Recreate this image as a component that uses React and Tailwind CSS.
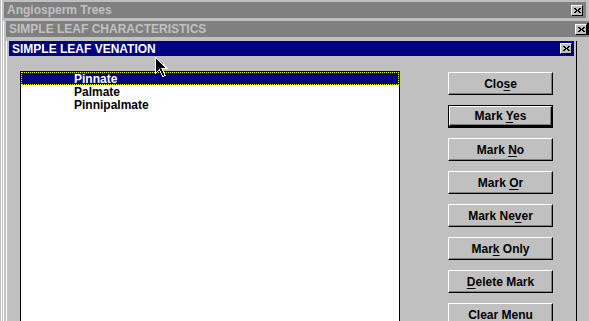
import React from 'react'

const font = "font-['Liberation_Sans',Arial,sans-serif]"

function CloseBox({ className = '' }) {
  return (
    <div className={`shrink-0 w-[12px] h-[11px] bg-[#c0c0c0] border-t border-l border-white border-r border-b border-r-black border-b-black flex items-center justify-center ${className}`}>
      <svg width="7" height="5" viewBox="0 0 7 5" shapeRendering="crispEdges">
        <path d="M0 0h2v1h-2zM5 0h2v1h-2zM1 1h2v1h-2zM4 1h2v1h-2zM2 2h3v1h-3zM1 3h2v1h-2zM4 3h2v1h-2zM0 4h2v1h-2zM5 4h2v1h-2z" fill="#000" />
      </svg>
    </div>
  )
}

function Btn({ label, u, isDefault }) {
  // label split around the underlined letter
  const i = u == null ? -1 : label.indexOf(u)
  const text =
    i < 0 ? label : (
      <>
        {label.slice(0, i)}
        <span className="underline underline-offset-[2px]">{label[i]}</span>
        {label.slice(i + 1)}
      </>
    )
  return (
    <div className={`shrink-0 w-[105px] h-[23px] ${isDefault ? 'border border-black border-b-2' : ''}`}>
      <div className="h-full border border-t-white border-l-white border-r-black border-b-black shadow-[inset_-1px_-1px_0_#808080] flex items-center justify-center text-[12px] font-bold text-black">
        <span className="whitespace-pre">{text}</span>
      </div>
    </div>
  )
}

const buttons = [
  { label: 'Close', u: 's' },
  { label: 'Mark Yes', u: 'Y', isDefault: true },
  { label: 'Mark No', u: 'N' },
  { label: 'Mark Or', u: 'O' },
  { label: 'Mark Never', u: 'v' },
  { label: 'Mark Only', u: 'k' },
  { label: 'Delete Mark', u: 'D' },
  { label: 'Clear Menu' },
]

const items = ['Pinnate', 'Palmate', 'Pinnipalmate']

export default function App() {
  return (
    <div className={`relative w-[589px] h-[321px] overflow-hidden bg-[#c0c0c0] pl-[1px] ${font}`}>
      <div className="h-full flex flex-col border-l border-white pl-[1px] pt-[2px]">
        {/* Angiosperm Trees */}
        <div className="shrink-0 ml-[1px] mr-[3px] h-[16px] bg-[#808080] flex items-center justify-between pl-[3px] pr-[3px]">
          <span className="text-[12px] font-bold text-[#c0c0c0] leading-none">Angiosperm Trees</span>
          <CloseBox />
        </div>

        {/* Simple leaf characteristics */}
        <div className="shrink-0 mt-[3px] flex flex-col border-l border-white pl-[2px]">
          <div className="shrink-0 h-[16px] bg-[#808080] flex items-center justify-between pl-[3px]">
            <span className="text-[12px] font-bold text-[#c0c0c0] leading-none">SIMPLE LEAF CHARACTERISTICS</span>
            <div className="flex items-center">
              <CloseBox />
              <div className="w-[2px] h-[12px] bg-black" />
            </div>
          </div>

          {/* Simple leaf venation */}
          <div className="shrink-0 mt-[4px] w-[571px] flex flex-col border-l border-white border-r border-r-black pl-[2px] pr-[2px]">
            <div className="shrink-0 h-[15px] bg-[#000080] flex items-center justify-between pl-[3px] pr-[2px]">
              <span className="text-[12px] font-bold text-white leading-none">SIMPLE LEAF VENATION</span>
              <CloseBox />
            </div>

            <div className="flex pl-[11px] pt-[15px]">
              {/* list box */}
              <div className="shrink-0 w-[380px] h-[280px] bg-white border border-black">
                {items.map((it, i) => (
                  <div
                    key={it}
                    className={`h-[13px] flex items-center text-[12px] font-bold leading-none ${
                      i === 0 ? 'bg-[#000080] text-white border border-dotted border-[#ffff00] pl-[52px]' : 'text-black pl-[53px]'
                    }`}
                  >
                    {it}
                  </div>
                ))}
              </div>

              {/* buttons */}
              <div className="ml-[48px] mt-[1px] flex flex-col gap-[10px]">
                {buttons.map(b => (
                  <Btn key={b.label} {...b} />
                ))}
              </div>
            </div>
          </div>
        </div>
      </div>

      {/* mouse pointer */}
      <svg className="absolute left-[155px] top-[57px]" width="13" height="21" viewBox="0 0 13 21" shapeRendering="crispEdges">
        <path d="M0.5 0.5 L0.5 16.5 L4.5 12.5 L7.5 19.5 L10 18.5 L7 11.5 L12 11.5 Z" fill="#000" stroke="#fff" strokeWidth="1" />
      </svg>
    </div>
  )
}
